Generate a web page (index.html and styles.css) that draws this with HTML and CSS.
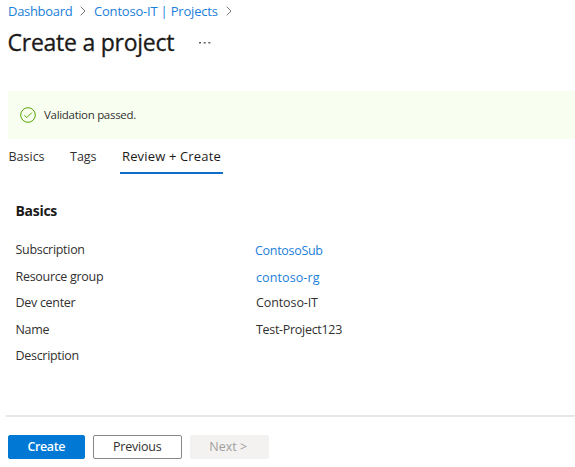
FILE: index.html
```html
<!DOCTYPE html>
<html lang="en">
<head>
<meta charset="utf-8">
<title>Create a project</title>
<link rel="stylesheet" href="styles.css">
</head>
<body>
<nav class="crumbs">
  <a class="crumb-home">Dashboard</a>
  <svg class="chevron" viewBox="0 0 6 10"><path d="M.7.7 5 5 .7 9.3"/></svg>
  <a class="crumb-projects">Contoso-IT | Projects</a>
  <svg class="chevron" viewBox="0 0 6 10"><path d="M.7.7 5 5 .7 9.3"/></svg>
</nav>
<header class="title">
  <h1>Create a project</h1>
  <svg class="more" viewBox="0 0 12 2"><path d="M0 0h2v1.5H0zM4.7 0h2v1.5h-2zM9.4 0h2v1.5h-2z"/></svg>
</header>
<div class="banner">
  <svg class="check" viewBox="0 0 16 16"><circle cx="8" cy="8" r="7.3"/><path d="m4.4 8.3 2.4 2.3 5-5"/></svg>
  <span>Validation passed.</span>
</div>
<nav class="tabs">
  <a class="tab tab-basics">Basics</a>
  <a class="tab tab-tags">Tags</a>
  <a class="tab active">Review + Create</a>
</nav>
<main class="review">
  <h2>Basics</h2>
  <dl>
    <dt>Subscription</dt><dd class="link subscription">ContosoSub</dd>
    <dt>Resource group</dt><dd class="link group">contoso-rg</dd>
    <dt>Dev center</dt><dd class="center">Contoso-IT</dd>
    <dt>Name</dt><dd>Test-Project123</dd>
    <dt>Description</dt><dd></dd>
  </dl>
</main>
<footer class="actions">
  <button class="primary">Create</button>
  <button class="secondary">Previous</button>
  <button class="next" disabled>Next &gt;</button>
</footer>
</body>
</html>
```
FILE: styles.css
```css
* { box-sizing: border-box; }
body {
  margin: 0;
  height: 467px;
  overflow: hidden;
  background: #fff;
  color: #323130;
  font: 12.5px/18px "Open Sans", "Noto Sans", sans-serif;
  white-space: nowrap;
}
.crumbs { display: flex; align-items: center; height: 21px; padding-left: 8px; color: #1b80d8; font-size: 13px; }
.crumb-home { width: 72px; letter-spacing: -.3px; }
.crumb-projects { width: 132px; letter-spacing: -.2px; }
.chevron { width: 6px; height: 10px; margin-right: 8px; fill: none; stroke: #777; stroke-width: 1; }
.title { display: flex; align-items: center; height: 41px; padding-left: 7.5px; }
h1 { margin: 0; width: 191.5px; font-size: 23px; line-height: 32px; font-weight: 500; letter-spacing: -.25px; color: #1b1a19; -webkit-text-stroke: .3px #1b1a19; }
.more { width: 12px; height: 2px; margin-top: 2px; fill: #605e5c; }
.banner { display: flex; align-items: center; gap: 8px; height: 48px; margin: 29px 0 0 8px; padding-left: 12px; background: #f8fff0; font-size: 11.5px; letter-spacing: -.3px; }
.check { width: 16px; height: 16px; fill: none; stroke: #57a300; stroke-width: 1; }
.tabs { display: flex; height: 35px; padding-left: 8px; }
.tab { height: 35px; line-height: 35px; }
.tab-basics { width: 62px; padding-left: .5px; }
.tab-tags { width: 50px; }
.active { width: 103px; padding-left: 2px; border-bottom: 2px solid #0f6cc8; color: #1b1a19; font-size: 13px; letter-spacing: .15px; }
.review { height: 243px; margin-left: 6px; padding: 27px 0 0 9.5px; border-bottom: 2px solid #e6e6e6; border-bottom-right-radius: 2px; }
h2 { margin: 0; font-size: 14px; line-height: 20px; font-weight: 700; letter-spacing: -.3px; color: #1b1a19; }
dl { display: grid; grid-template-columns: 240.5px 1fr; grid-auto-rows: 26.5px; align-items: center; margin: 16px 0 0; letter-spacing: -.3px; }
dd { margin: 0; }
.link { color: #1b80d8; position: relative; top: 1px; }
.subscription { left: -1px; }
.group { letter-spacing: .1px; }
.center { letter-spacing: -.1px; }
.actions { display: flex; gap: 8px; padding: 18px 0 0 7.5px; }
button { height: 24px; padding: 0; border: 1px solid #0078d4; border-radius: 2px; font: 12.5px/20px "Open Sans", "Noto Sans", sans-serif; }
.primary { width: 77.5px; background: #0078d4; color: #fff; font-weight: 600; letter-spacing: -.4px; }
.secondary { width: 88.5px; background: #fff; border-color: #8a8886; color: #323130; letter-spacing: -.2px; }
.next { width: 79.5px; padding-right: 2px; background: #f3f2f1; border-color: #f3f2f1; color: #a19f9d; }
```
